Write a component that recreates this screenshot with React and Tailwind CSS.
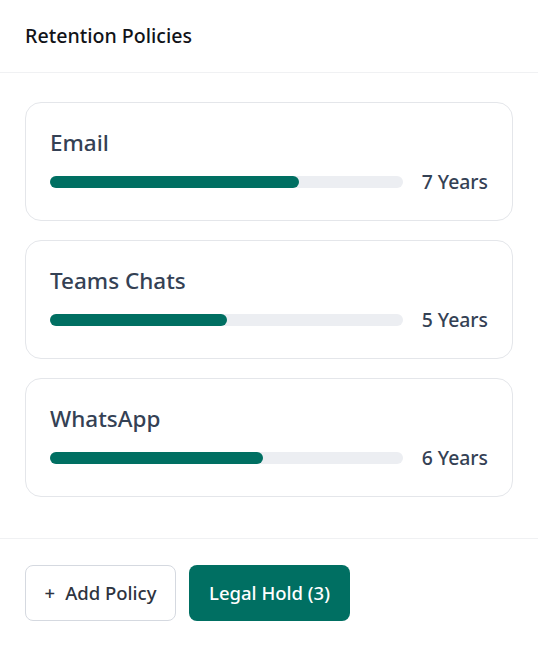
const policies = [
  { name: 'Email', years: 7, pct: 70.5 },
  { name: 'Teams Chats', years: 5, pct: 50.3 },
  { name: 'WhatsApp', years: 6, pct: 60.5 },
]

function PolicyCard({ name, years, pct }) {
  return (
    <div className="rounded-2xl border border-[#e4e6ea] bg-white px-6 pt-[26px] pb-[25px]">
      <div className="text-[22.5px] font-medium leading-[28px] text-[#344154]">{name}</div>
      <div className="mt-[12px] flex h-[26px] items-center">
        <div className="h-3 flex-1 rounded-full bg-[#eceef2]">
          <div className="h-3 rounded-full bg-[#006f62]" style={{ width: `${pct}%` }} />
        </div>
        <span className="ml-[19px] text-[19.4px] font-medium text-[#344154]">{years} Years</span>
      </div>
    </div>
  )
}

export default function App() {
  return (
    <div className="h-[647px] w-[538px] bg-white" style={{ fontFamily: '"Noto Sans", "Open Sans", sans-serif' }}>
      <div className="flex h-[73px] items-center border-b border-[#f0f1f3] px-[25px]">
        <h2 className="text-[19.6px] font-medium text-[#111318]">Retention Policies</h2>
      </div>
      <div className="flex flex-col gap-[19px] border-b border-[#f0f1f3] pb-[41px] pl-[25px] pr-[25px] pt-[29px]">
        {policies.map((p) => (
          <PolicyCard key={p.name} {...p} />
        ))}
      </div>
      <div className="flex gap-[13px] px-[25px] pt-[26px]">
        <button className="flex h-[56px] w-[151px] items-center justify-center gap-[10px] rounded-lg border border-[#d5d9e0] bg-white text-[18.5px] font-medium text-[#2e3440]">
          <span>+</span>
          <span>Add Policy</span>
        </button>
        <button className="flex h-[56px] w-[161px] items-center justify-center rounded-lg bg-[#006f62] text-[18.5px] font-medium text-white">
          Legal Hold (3)
        </button>
      </div>
    </div>
  )
}
